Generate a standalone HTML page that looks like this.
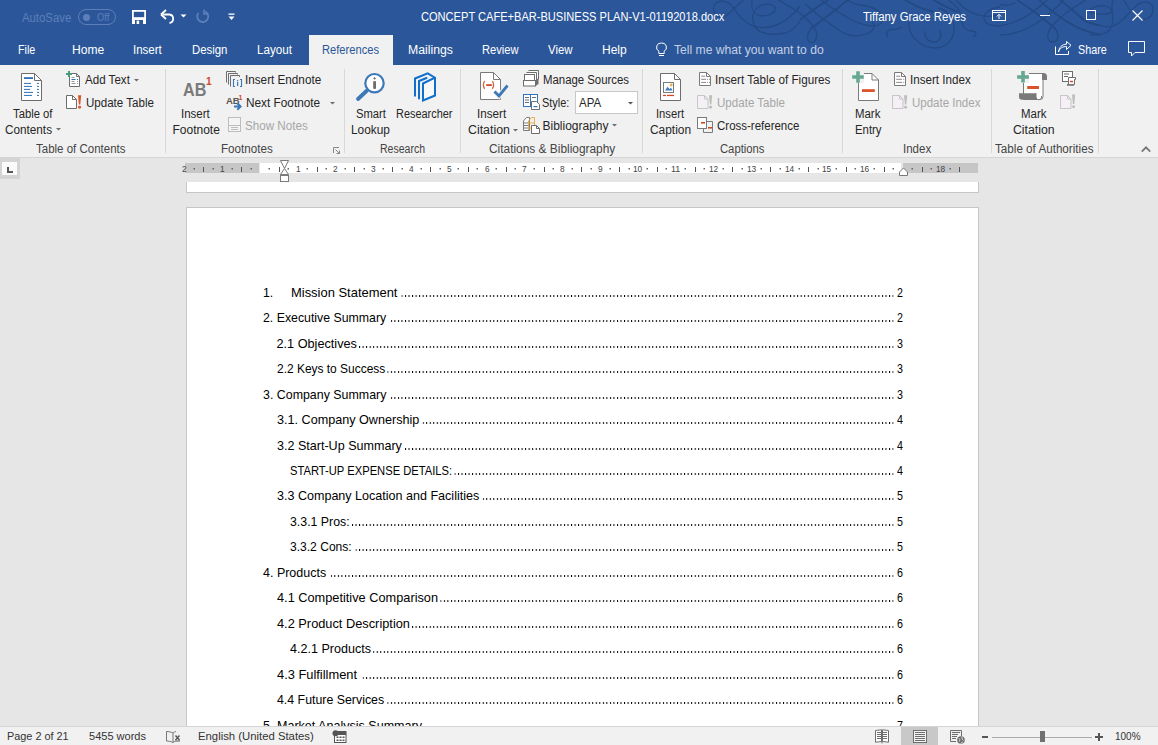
<!DOCTYPE html>
<html><head><meta charset="utf-8">
<style>
*{margin:0;padding:0;box-sizing:border-box}
html,body{width:1158px;height:745px;overflow:hidden;background:#e6e6e6;font-family:"Liberation Sans",sans-serif}
body{position:relative}
.a{position:absolute;white-space:nowrap}
.t{transform-origin:0 0}
svg.a{overflow:visible}
</style></head><body>
<div class="a" style="left:0px;top:0px;width:1158px;height:65px;background:#2b579a"></div>
<div class="a" style="left:0px;top:65px;width:1158px;height:92px;background:#f1f1f1"></div>
<div class="a" style="left:0px;top:157px;width:1158px;height:1px;background:#d5d5d5"></div>
<div class="a" style="left:0px;top:158px;width:1158px;height:568px;background:#e6e6e6"></div>
<svg class="a" style="left:0;top:0" width="1158" height="65"><g fill="none" stroke="#22477f" stroke-width="1.3" opacity="0.8"><path d="M723 18C714 16 711 8 716 3C721 -1 730 1 735 10C742 21 752 27 762 27.6C778 28 792 17 800 6"/><path d="M725 16.5C731 12 737 6 743 0"/><path d="M752 0C751 8 752 14 760 15.5C770 17 776 12 775 8C774 4 766 3 760 6C752 10 751 20 755 27C760 34 772 36 785 33C792 31 797 26 800 21"/><path d="M778 0C784 3 792 8 800 13"/><path d="M800 20C810 12 820 5 828.5 0" stroke-width="1.8"/><path d="M811 28.5C825 18 838 8 848 0" stroke-width="1.8"/><path d="M811 28.5C807 33 806 40 810 42C815 44 818 38 816 31C813 24 806 18 800 13"/><path d="M805 4C815 13 826 22 843 32.8C852 37 862 36 869 33C875 30 875 24 872 22"/><path d="M821 0C830 7 842 15 856 22C866 26 878 28 882 22C885 16 878 8 866 6C858 5 850 3 848 0"/><path d="M888 37C885 33 888 29 893 29.5C897 30 900 28 902 27"/><path d="M909 22C908 34 918 47 934 48C948 48 955 38 954 26C953 16 946 10 938 8"/><path d="M925 31C924 37 928 42 934 42C940 42 942 36 940 30"/><path d="M905 0C915 6 925 10 934 12" stroke-width="1.8"/><path d="M933 0C943 5 952 10 958 12" stroke-width="1.8"/><path d="M948 0C958 6 962 12 962 20C962 27 966 31 972 31C977 31 977 35 973 37"/><path d="M956 0C963 8 970 13 978 15C985 17 995 16 1000 15"/><path d="M1000 7C990 8 984 13 984 18C984 23 990 26 1000 26"/><path d="M1017 0C1030 8 1045 20 1055 28.5" stroke-width="1.8"/><path d="M1055 28.5C1060 34 1058 42 1053 42C1047 42 1046 34 1051 27C1058 19 1072 8 1086 0"/><path d="M1039 0C1050 10 1062 20 1078 27.6C1088 32 1095 34 1100 34.5" stroke-width="1.8"/><path d="M1000 35C1015 35 1030 28 1043 19C1052 12 1058 6 1064 0"/><path d="M1000 26C1012 24 1025 18 1034 11C1040 7 1044 3 1047 0"/><path d="M1060 0C1068 6 1078 15 1086 21.6C1092 24 1096 25 1100 25" stroke-width="1.8"/><path d="M1000 4.3C1006 6 1012 5 1015 2.6"/><path d="M1090 22C1096 25 1104 27 1110 26.8C1118 26 1125 18 1130 12C1135 6 1140 2 1145 2C1150 2 1153 5 1153 10C1153 15 1149 19 1143.7 19.5"/><path d="M1090 12C1094 14 1102 15 1107 14C1112 13 1113 10 1110 8C1106 5 1098 4 1090 9.4"/><path d="M1112.8 0C1111 6 1112 12 1112.8 16.8C1113 24 1111 30 1106.8 32.2C1102 35 1096 35.6 1090 35"/><path d="M1123.6 0C1126 4 1128 7 1130 10"/></g></svg>
<div class="a t" style="left:21.50px;top:12.00px;font-size:12px;line-height:12px;color:#5d7fb9;font-weight:normal;font-family:'Liberation Sans',sans-serif;transform:scaleX(0.9453);">AutoSave</div>
<div class="a" style="left:78px;top:9px;width:38px;height:16px;border:1px solid #5d7fb9;border-radius:8px"></div>
<div class="a" style="left:83px;top:13.5px;width:7px;height:7px;background:#5d7fb9;border-radius:50%"></div>
<div class="a t" style="left:97.00px;top:12.00px;font-size:11px;line-height:11px;color:#5d7fb9;font-weight:normal;font-family:'Liberation Sans',sans-serif;transform:scaleX(0.8434);">Off</div>
<svg class="a" style="left:132px;top:10px" width="14" height="14" viewBox="0 0 14 14"><rect x="0" y="0" width="14" height="14" fill="#fff"/><rect x="1.8" y="1.8" width="10.4" height="5.4" fill="#2b579a"/><rect x="3" y="10" width="8" height="4" fill="#2b579a"/><rect x="4.6" y="10.6" width="2.6" height="3.4" fill="#fff"/></svg>
<svg class="a" style="left:160px;top:9px" width="17" height="15" viewBox="0 0 17 15"><path d="M2.5 5.5H9.5A4.3 4.3 0 0 1 9.5 14" fill="none" stroke="#fff" stroke-width="1.8"/><path d="M1 5.5L6 1M1 5.5L6 10" fill="none" stroke="#fff" stroke-width="1.8"/></svg>
<svg class="a" style="left:180px;top:14px" width="7" height="4" viewBox="0 0 7 4"><path d="M0.5 0.5H6.5L3.5 3.5Z" fill="#fff"/></svg>
<svg class="a" style="left:195px;top:9px" width="15" height="15" viewBox="0 0 15 15"><path d="M10 2.5A5.5 5.5 0 1 1 3.5 4" fill="none" stroke="#5d7fb9" stroke-width="1.8"/><path d="M9 0.5V5H13.5" fill="none" stroke="#5d7fb9" stroke-width="1.6"/></svg>
<svg class="a" style="left:228px;top:13px" width="7" height="8" viewBox="0 0 7 8"><rect x="0.5" y="0.5" width="6" height="1.3" fill="#fff"/><path d="M0.5 3.5H6.5L3.5 7Z" fill="#fff"/></svg>
<div class="a t" style="left:421.00px;top:11.00px;font-size:12px;line-height:12px;color:#fff;font-weight:normal;font-family:'Liberation Sans',sans-serif;transform:scaleX(0.9228);">CONCEPT CAFE+BAR-BUSINESS PLAN-V1-01192018.docx</div>
<div class="a t" style="left:863.00px;top:11.00px;font-size:12px;line-height:12px;color:#fff;font-weight:normal;font-family:'Liberation Sans',sans-serif;transform:scaleX(0.9475);">Tiffany Grace Reyes</div>
<svg class="a" style="left:992px;top:10px" width="14" height="11" viewBox="0 0 14 11"><rect x="0.5" y="0.5" width="13" height="10" fill="none" stroke="#fff" stroke-width="1"/><path d="M0.5 2.5H13.5" stroke="#fff" stroke-width="1"/><path d="M7 9V4.5M4.8 6.5L7 4.3L9.2 6.5" fill="none" stroke="#fff" stroke-width="1"/></svg>
<div class="a" style="left:1040px;top:15px;width:10px;height:1px;background:#fff"></div>
<div class="a" style="left:1086px;top:10px;width:10px;height:10px;border:1px solid #fff"></div>
<svg class="a" style="left:1132px;top:10px" width="11" height="11" viewBox="0 0 11 11"><path d="M0.5 0.5L10.5 10.5M10.5 0.5L0.5 10.5" stroke="#fff" stroke-width="1.1"/></svg>
<div class="a" style="left:309px;top:35px;width:84px;height:30px;background:#f1f1f1"></div>
<div class="a t" style="left:18.40px;top:44.00px;font-size:12px;line-height:12px;color:#fff;font-weight:normal;font-family:'Liberation Sans',sans-serif;transform:scaleX(0.8951);">File</div>
<div class="a t" style="left:72.30px;top:44.00px;font-size:12px;line-height:12px;color:#fff;font-weight:normal;font-family:'Liberation Sans',sans-serif;transform:scaleX(1.0051);">Home</div>
<div class="a t" style="left:133.34px;top:44.00px;font-size:12px;line-height:12px;color:#fff;font-weight:normal;font-family:'Liberation Sans',sans-serif;transform:scaleX(0.9603);">Insert</div>
<div class="a t" style="left:192.40px;top:44.00px;font-size:12px;line-height:12px;color:#fff;font-weight:normal;font-family:'Liberation Sans',sans-serif;transform:scaleX(0.9488);">Design</div>
<div class="a t" style="left:257.30px;top:44.00px;font-size:12px;line-height:12px;color:#fff;font-weight:normal;font-family:'Liberation Sans',sans-serif;transform:scaleX(0.9729);">Layout</div>
<div class="a t" style="left:408.30px;top:44.00px;font-size:12px;line-height:12px;color:#fff;font-weight:normal;font-family:'Liberation Sans',sans-serif;transform:scaleX(1.0201);">Mailings</div>
<div class="a t" style="left:482.00px;top:44.00px;font-size:12px;line-height:12px;color:#fff;font-weight:normal;font-family:'Liberation Sans',sans-serif;transform:scaleX(0.9299);">Review</div>
<div class="a t" style="left:547.90px;top:44.00px;font-size:12px;line-height:12px;color:#fff;font-weight:normal;font-family:'Liberation Sans',sans-serif;transform:scaleX(0.9492);">View</div>
<div class="a t" style="left:602.00px;top:44.00px;font-size:12px;line-height:12px;color:#fff;font-weight:normal;font-family:'Liberation Sans',sans-serif;">Help</div>
<div class="a t" style="left:322.00px;top:44.00px;font-size:12px;line-height:12px;color:#2b579a;font-weight:normal;font-family:'Liberation Sans',sans-serif;transform:scaleX(0.9289);">References</div>
<svg class="a" style="left:655px;top:42px" width="13" height="15" viewBox="0 0 13 15"><path d="M6.5 1A4.4 4.4 0 0 0 3.8 9.2V11.5H9.2V9.2A4.4 4.4 0 0 0 6.5 1Z" fill="none" stroke="#fff" stroke-width="1"/><path d="M4 13.5H9" stroke="#fff" stroke-width="1"/></svg>
<div class="a t" style="left:673.60px;top:44.00px;font-size:12px;line-height:12px;color:#c3cfe4;font-weight:normal;font-family:'Liberation Sans',sans-serif;transform:scaleX(1.0108);">Tell me what you want to do</div>
<svg class="a" style="left:1054px;top:41px" width="18" height="15" viewBox="0 0 18 15"><path d="M1.5 5.5V13.5H14.5V10" fill="none" stroke="#fff" stroke-width="1"/><path d="M4.5 11C5.5 7 9 5.5 12.5 5.5V8.5L17 4.3L12.5 0.5V3.2C8 3.2 5 6.5 4.5 11Z" fill="none" stroke="#fff" stroke-width="1"/></svg>
<div class="a t" style="left:1078.00px;top:44.00px;font-size:12px;line-height:12px;color:#fff;font-weight:normal;font-family:'Liberation Sans',sans-serif;transform:scaleX(0.8965);">Share</div>
<svg class="a" style="left:1128px;top:41px" width="18" height="16" viewBox="0 0 18 16"><path d="M0.5 0.5H16.5V11.5H7L3.5 15V11.5H0.5Z" fill="none" stroke="#fff" stroke-width="1"/></svg>
<div class="a" style="left:165px;top:69px;width:1px;height:84px;background:#d8d8d8"></div>
<div class="a" style="left:344px;top:69px;width:1px;height:84px;background:#d8d8d8"></div>
<div class="a" style="left:460px;top:69px;width:1px;height:84px;background:#d8d8d8"></div>
<div class="a" style="left:642px;top:69px;width:1px;height:84px;background:#d8d8d8"></div>
<div class="a" style="left:842px;top:69px;width:1px;height:84px;background:#d8d8d8"></div>
<div class="a" style="left:991px;top:69px;width:1px;height:84px;background:#d8d8d8"></div>
<div class="a" style="left:1098px;top:69px;width:1px;height:84px;background:#d8d8d8"></div>
<svg class="a" style="left:21px;top:73px" width="22" height="29" viewBox="0 0 22 29"><path d="M0.5 0.5H13.5L20.5 7.5V27.5H0.5Z" fill="#fff" stroke="#6d6d6d" stroke-width="1"/><path d="M13.5 0.5V7.5H20.5" fill="none" stroke="#6d6d6d" stroke-width="1"/><rect x="3" y="4.2" width="9" height="1.8" fill="#2e6fb8"/><g fill="#2e6fb8"><rect x="3" y="9.9" width="7" height="1"/><rect x="3" y="12.9" width="8" height="1"/><rect x="3" y="15.9" width="6" height="1"/><rect x="3" y="18.9" width="9" height="1"/><rect x="3" y="21.9" width="8" height="1"/><rect x="16" y="9.9" width="2" height="1"/><rect x="16" y="12.9" width="2" height="1"/><rect x="16" y="15.9" width="2" height="1"/><rect x="16" y="18.9" width="2" height="1"/><rect x="16" y="21.9" width="2" height="1"/></g></svg>
<div class="a t" style="left:12.50px;top:108.00px;font-size:12px;line-height:12px;color:#262626;font-weight:normal;font-family:'Liberation Sans',sans-serif;transform:scaleX(0.9392);">Table of</div>
<div class="a t" style="left:4.70px;top:124.00px;font-size:12px;line-height:12px;color:#262626;font-weight:normal;font-family:'Liberation Sans',sans-serif;transform:scaleX(0.9786);">Contents</div>
<svg class="a" style="left:55.5px;top:128px" width="5" height="3" viewBox="0 0 5 3"><path d="M0 0H5L2.5 2.5Z" fill="#6d6d6d"/></svg>
<svg class="a" style="left:66px;top:71px" width="15" height="17" viewBox="0 0 15 17"><path d="M3.5 2.5H10.5L13.5 5.5V15.5H3.5Z" fill="#fff" stroke="#6d6d6d" stroke-width="1"/><path d="M10.5 2.5V5.5H13.5" fill="none" stroke="#6d6d6d"/><path d="M3 0V6M0 3H6" stroke="#4c9a7c" stroke-width="2"/><g fill="#9a9a9a"><rect x="5.5" y="6" width="3" height="1"/><rect x="5.5" y="10" width="3" height="1"/><rect x="5.5" y="12" width="4" height="1"/><rect x="11" y="10" width="1" height="1"/><rect x="11" y="12" width="1" height="1"/></g><rect x="5.5" y="8" width="4" height="1" fill="#2e6fb8"/><rect x="11" y="8" width="1" height="1" fill="#2e6fb8"/></svg>
<div class="a t" style="left:85.00px;top:74.00px;font-size:12px;line-height:12px;color:#262626;font-weight:normal;font-family:'Liberation Sans',sans-serif;transform:scaleX(0.9650);">Add Text</div>
<svg class="a" style="left:133.5px;top:78.5px" width="5" height="3" viewBox="0 0 5 3"><path d="M0 0H5L2.5 2.5Z" fill="#6d6d6d"/></svg>
<svg class="a" style="left:66px;top:95px" width="16" height="15" viewBox="0 0 16 15"><path d="M0.5 0.5H6.5L10.5 4.5V13.5H0.5Z" fill="#fff" stroke="#6d6d6d" stroke-width="1"/><path d="M6.5 0.5V4.5H10.5" fill="none" stroke="#6d6d6d"/><path d="M12 0.3H15.2L14.3 9.5H12.9Z" fill="#d9542b"/><circle cx="13.6" cy="12.3" r="1.45" fill="#d9542b"/></svg>
<div class="a t" style="left:85.60px;top:97.00px;font-size:12px;line-height:12px;color:#262626;font-weight:normal;font-family:'Liberation Sans',sans-serif;transform:scaleX(0.9628);">Update Table</div>
<div class="a t" style="left:36.00px;top:143.00px;font-size:12px;line-height:12px;color:#444444;font-weight:normal;font-family:'Liberation Sans',sans-serif;transform:scaleX(0.9583);">Table of Contents</div>
<div class="a t" style="left:183.20px;top:81.00px;font-size:18px;line-height:18px;color:#7a7a7a;font-weight:bold;font-family:'Liberation Sans',sans-serif;transform:scaleX(0.8962);">AB</div>
<div class="a t" style="left:205.50px;top:76.00px;font-size:11px;line-height:11px;color:#d24726;font-weight:bold;font-family:'Liberation Sans',sans-serif;transform:scaleX(0.9167);">1</div>
<div class="a t" style="left:181.44px;top:108.00px;font-size:12px;line-height:12px;color:#262626;font-weight:normal;font-family:'Liberation Sans',sans-serif;transform:scaleX(0.9603);">Insert</div>
<div class="a t" style="left:172.50px;top:124.00px;font-size:12px;line-height:12px;color:#262626;font-weight:normal;font-family:'Liberation Sans',sans-serif;">Footnote</div>
<svg class="a" style="left:226px;top:71px" width="17" height="17" viewBox="0 0 17 17"><g fill="none" stroke="#6d6d6d" stroke-width="1"><path d="M0.5 11.5V0.5H9.5V1.5"/><path d="M2.5 13.5V2.5H11.5V3.5"/><path d="M4.5 15.5V4.5H13.5V6"/></g><rect x="5" y="5" width="8" height="11" fill="#f1f1f1"/><path d="M9 8.5H7.5V15.5H9M14 8.5H15.5V15.5H14" fill="none" stroke="#3c78b8" stroke-width="1.1"/><rect x="11" y="9" width="1.2" height="1.2" fill="#3c78b8"/><rect x="11" y="11" width="1.2" height="4" fill="#3c78b8"/></svg>
<div class="a t" style="left:244.52px;top:74.00px;font-size:12px;line-height:12px;color:#262626;font-weight:normal;font-family:'Liberation Sans',sans-serif;transform:scaleX(0.9757);">Insert Endnote</div>
<svg class="a" style="left:226px;top:94px" width="17" height="16" viewBox="0 0 17 16"><text x="0" y="9.5" font-family="Liberation Sans" font-weight="bold" font-size="9.5" fill="#555">AB</text><text x="12.5" y="6" font-family="Liberation Sans" font-weight="bold" font-size="7" fill="#d24726">1</text><path d="M8 12.5H14.5M11.3 9.3L14.5 12.5L11.3 15.7" fill="none" stroke="#3c78b8" stroke-width="2.1"/></svg>
<div class="a t" style="left:245.50px;top:97.00px;font-size:12px;line-height:12px;color:#262626;font-weight:normal;font-family:'Liberation Sans',sans-serif;transform:scaleX(0.9841);">Next Footnote</div>
<svg class="a" style="left:330px;top:101.5px" width="5" height="3" viewBox="0 0 5 3"><path d="M0 0H5L2.5 2.5Z" fill="#6d6d6d"/></svg>
<svg class="a" style="left:228px;top:117px" width="13" height="15" viewBox="0 0 13 15"><rect x="0.5" y="0.5" width="12" height="14" fill="#f4f4f4" stroke="#bdbdbd"/><path d="M0.5 8.5H12.5" stroke="#bdbdbd"/><g fill="#bdbdbd"><rect x="3" y="10" width="7" height="1"/><rect x="3" y="12" width="7" height="1"/></g></svg>
<div class="a t" style="left:245.00px;top:120.00px;font-size:12px;line-height:12px;color:#a6a6a6;font-weight:normal;font-family:'Liberation Sans',sans-serif;transform:scaleX(0.9691);">Show Notes</div>
<div class="a t" style="left:220.60px;top:143.00px;font-size:12px;line-height:12px;color:#444444;font-weight:normal;font-family:'Liberation Sans',sans-serif;transform:scaleX(0.9688);">Footnotes</div>
<svg class="a" style="left:333px;top:146.5px" width="7" height="7" viewBox="0 0 7 7"><path d="M0.5 6V0.5H6" fill="none" stroke="#888"/><path d="M2.5 2.5L6.5 6.5M3.5 6.5H6.5V3.5" fill="none" stroke="#888"/></svg>
<svg class="a" style="left:356px;top:72px" width="30" height="30" viewBox="0 0 30 30"><path d="M2 27L11 18.5" stroke="#3c78b8" stroke-width="3.8" stroke-linecap="round"/><circle cx="18.5" cy="11.2" r="9.2" fill="#fff" stroke="#3c78b8" stroke-width="2.2"/><rect x="17.2" y="9.2" width="2.8" height="7.6" fill="#6d6d6d"/><path d="M18.6 5L20 6.4L18.6 7.8L17.2 6.4Z" fill="#6d6d6d"/></svg>
<div class="a t" style="left:356.00px;top:108.00px;font-size:12px;line-height:12px;color:#262626;font-weight:normal;font-family:'Liberation Sans',sans-serif;transform:scaleX(0.9366);">Smart</div>
<div class="a t" style="left:351.30px;top:124.00px;font-size:12px;line-height:12px;color:#262626;font-weight:normal;font-family:'Liberation Sans',sans-serif;transform:scaleX(0.9875);">Lookup</div>
<svg class="a" style="left:408px;top:68px" width="34" height="36" viewBox="0 0 34 36"><path d="M15 15.5L27 10V27.5L15 32.5Z" fill="#f8f8f8"/><g fill="none" stroke="#0f6fcd" stroke-width="2" stroke-linejoin="miter"><path d="M7 28.5V10.5L19.7 5.3L27 9.7V27.5L15 32.5V15.5L27 9.7"/><path d="M11 30.5V13L18.5 10" stroke-linecap="round"/></g></svg>
<div class="a t" style="left:396.30px;top:108.00px;font-size:12px;line-height:12px;color:#262626;font-weight:normal;font-family:'Liberation Sans',sans-serif;transform:scaleX(0.9092);">Researcher</div>
<div class="a t" style="left:379.60px;top:143.00px;font-size:12px;line-height:12px;color:#444444;font-weight:normal;font-family:'Liberation Sans',sans-serif;transform:scaleX(0.8760);">Research</div>
<svg class="a" style="left:480px;top:72px" width="29" height="29" viewBox="0 0 29 29"><path d="M0.5 0.5H13.5L20.5 7.5V27.5H0.5Z" fill="#fff" stroke="#7a7a7a"/><path d="M13.5 0.5V7.5H20.5" fill="none" stroke="#7a7a7a"/><path d="M4.6 9Q2.2 12.9 4.6 16.8M12.4 9Q14.8 12.9 12.4 16.8" fill="none" stroke="#d9623f" stroke-width="1.3"/><rect x="6.2" y="12.2" width="5.6" height="1.8" fill="#d24726"/><path d="M14.5 19.5L19 24L27.5 13.5" fill="none" stroke="#f1f1f1" stroke-width="5"/><path d="M14.5 19.5L19 24L27.5 13.5" fill="none" stroke="#3c78b8" stroke-width="2.8"/></svg>
<div class="a t" style="left:477.03px;top:108.00px;font-size:12px;line-height:12px;color:#262626;font-weight:normal;font-family:'Liberation Sans',sans-serif;transform:scaleX(0.9704);">Insert</div>
<div class="a t" style="left:467.50px;top:124.00px;font-size:12px;line-height:12px;color:#262626;font-weight:normal;font-family:'Liberation Sans',sans-serif;transform:scaleX(1.0296);">Citation</div>
<svg class="a" style="left:512.5px;top:128.5px" width="5" height="3" viewBox="0 0 5 3"><path d="M0 0H5L2.5 2.5Z" fill="#6d6d6d"/></svg>
<svg class="a" style="left:523px;top:70px" width="16" height="17" viewBox="0 0 16 17"><g fill="#fff" stroke="#6d6d6d"><path d="M5.5 0.5H15.5V9.5"/><path d="M3.5 2.5H13.5V11.5"/><rect x="1.5" y="4.5" width="10" height="6"/><rect x="0.5" y="10.5" width="12" height="5.5"/></g><path d="M12.5 10.5L15.5 8V14L12.5 16Z" fill="#6d6d6d"/></svg>
<div class="a t" style="left:542.50px;top:74.00px;font-size:12px;line-height:12px;color:#262626;font-weight:normal;font-family:'Liberation Sans',sans-serif;transform:scaleX(0.9480);">Manage Sources</div>
<svg class="a" style="left:523px;top:94px" width="17" height="16" viewBox="0 0 17 16"><g fill="#fff" stroke="#2e74c0"><rect x="0.5" y="0.5" width="7" height="12"/><rect x="7.5" y="0.5" width="7" height="12"/></g><g fill="#6d6d6d"><rect x="2" y="3" width="4" height="1"/><rect x="2" y="5.5" width="4" height="1"/><rect x="2" y="8" width="4" height="1"/><rect x="9" y="3" width="4" height="1"/></g><path d="M8.5 7.5H13.5L16.5 10.5V15.5H8.5Z" fill="#fff" stroke="#6d6d6d"/><rect x="10.5" y="12" width="4" height="1.2" fill="#2e74c0"/></svg>
<div class="a t" style="left:542.00px;top:97.00px;font-size:12px;line-height:12px;color:#262626;font-weight:normal;font-family:'Liberation Sans',sans-serif;transform:scaleX(0.9098);">Style:</div>
<div class="a" style="left:575px;top:91px;width:63px;height:23px;background:#fff;border:1px solid #c8c8c8"></div>
<div class="a t" style="left:578.50px;top:97.00px;font-size:12px;line-height:12px;color:#262626;font-weight:normal;font-family:'Liberation Sans',sans-serif;transform:scaleX(0.9560);">APA</div>
<svg class="a" style="left:627.5px;top:101.5px" width="5" height="3" viewBox="0 0 5 3"><path d="M0 0H5L2.5 2.5Z" fill="#555"/></svg>
<svg class="a" style="left:523px;top:116px" width="17" height="18" viewBox="0 0 17 18"><path d="M0.5 5L3.5 1.5H6.5V14.5H0.5Z" fill="#fff" stroke="#7a7a7a"/><g fill="#7a7a7a"><rect x="1" y="6.5" width="5" height="1"/><rect x="1" y="9" width="5" height="1"/><rect x="1" y="11.5" width="5" height="1"/></g><path d="M5.5 5L8.5 1.5H11.5V9M5.5 5V14" fill="none" stroke="#e8b04a" stroke-width="1"/><g fill="#e8b04a"><rect x="6" y="6.5" width="5" height="1"/><rect x="6" y="11.5" width="2" height="1"/></g><path d="M8.5 9.5H13.5L16.5 12.5V17.5H8.5Z" fill="#fff" stroke="#6d6d6d"/><path d="M13.5 9.5V12.5H16.5" fill="none" stroke="#6d6d6d"/></svg>
<div class="a t" style="left:542.50px;top:120.00px;font-size:12px;line-height:12px;color:#262626;font-weight:normal;font-family:'Liberation Sans',sans-serif;">Bibliography</div>
<svg class="a" style="left:612px;top:123.5px" width="5" height="3" viewBox="0 0 5 3"><path d="M0 0H5L2.5 2.5Z" fill="#6d6d6d"/></svg>
<div class="a t" style="left:488.70px;top:143.00px;font-size:12px;line-height:12px;color:#444444;font-weight:normal;font-family:'Liberation Sans',sans-serif;transform:scaleX(0.9914);">Citations &amp; Bibliography</div>
<svg class="a" style="left:660px;top:73px" width="22" height="29" viewBox="0 0 22 29"><path d="M0.5 0.5H14.5L20.5 6.5V27.5H0.5Z" fill="#fff" stroke="#6d6d6d"/><path d="M14.5 0.5V6.5H20.5" fill="none" stroke="#6d6d6d"/><rect x="3.5" y="9.5" width="10" height="10" fill="#fff" stroke="#7a7a7a"/><path d="M5 17.5L7.5 13.8L9.5 16L11 14.8L12.5 17.5Z" fill="#3e7cc0"/><circle cx="11.3" cy="12" r="1.4" fill="#e8b04a"/><rect x="3" y="21.8" width="3" height="1.3" fill="#d24726"/><rect x="7" y="21.8" width="7" height="1.3" fill="#d24726"/></svg>
<div class="a t" style="left:655.77px;top:108.00px;font-size:12px;line-height:12px;color:#262626;font-weight:normal;font-family:'Liberation Sans',sans-serif;transform:scaleX(0.9334);">Insert</div>
<div class="a t" style="left:650.00px;top:124.00px;font-size:12px;line-height:12px;color:#262626;font-weight:normal;font-family:'Liberation Sans',sans-serif;transform:scaleX(0.9929);">Caption</div>
<svg class="a" style="left:699px;top:72px" width="13" height="14" viewBox="0 0 13 14"><path d="M0.5 0.5H7.5L11.5 4.5V13.5H0.5Z" fill="#fff" stroke="#7a7a7a"/><path d="M7.5 0.5V4.5H11.5" fill="none" stroke="#7a7a7a"/><g fill="#8a8a8a"><rect x="2.2" y="3.7" width="3.8" height="1"/><rect x="2.2" y="6.8" width="4.8" height="1"/><rect x="2.2" y="9.9" width="4.8" height="1"/><rect x="8" y="6.8" width="1" height="1"/><rect x="8" y="9.9" width="1" height="1"/><rect x="10" y="6.8" width="1" height="1"/><rect x="10" y="9.9" width="1" height="1"/></g></svg>
<div class="a t" style="left:715.23px;top:74.00px;font-size:12px;line-height:12px;color:#262626;font-weight:normal;font-family:'Liberation Sans',sans-serif;transform:scaleX(0.9735);">Insert Table of Figures</div>
<svg class="a" style="left:697px;top:95px" width="16" height="14" viewBox="0 0 16 14"><path d="M0.5 0.5H7.5L11 4V13.5H0.5Z" fill="#f4f0f6" stroke="#c6c6c6"/><path d="M7.5 0.5V4H11" fill="none" stroke="#c6c6c6"/><path d="M12 0.3H15.2L14.3 9.5H12.9Z" fill="#bdbdbd"/><circle cx="13.6" cy="12.3" r="1.45" fill="#bdbdbd"/></svg>
<div class="a t" style="left:716.50px;top:97.00px;font-size:12px;line-height:12px;color:#a6a6a6;font-weight:normal;font-family:'Liberation Sans',sans-serif;transform:scaleX(0.9642);">Update Table</div>
<svg class="a" style="left:697px;top:117px" width="17" height="17" viewBox="0 0 17 17"><path d="M9.5 4.5H15.5V15.5H6.5V11.5" fill="none" stroke="#7a7a7a"/><rect x="0.5" y="0.5" width="9" height="11" fill="#fff" stroke="#7a7a7a"/><rect x="4" y="5" width="4" height="1.6" fill="#d24726"/><rect x="11" y="10" width="4" height="1.6" fill="#d24726"/></svg>
<div class="a t" style="left:716.50px;top:120.00px;font-size:12px;line-height:12px;color:#262626;font-weight:normal;font-family:'Liberation Sans',sans-serif;transform:scaleX(0.9577);">Cross-reference</div>
<div class="a t" style="left:719.80px;top:143.00px;font-size:12px;line-height:12px;color:#444444;font-weight:normal;font-family:'Liberation Sans',sans-serif;transform:scaleX(0.9375);">Captions</div>
<svg class="a" style="left:852px;top:71px" width="28" height="30" viewBox="0 0 28 30"><path d="M6.5 2.5H20L26.5 9V29.5H6.5Z" fill="#fff" stroke="#7a7a7a"/><path d="M20 2.5V9H26.5" fill="none" stroke="#7a7a7a"/><path d="M0 0H12V12H0Z" fill="#f1f1f1"/><path d="M6 0.2V11.8M0.2 6H11.8" stroke="#66a893" stroke-width="3.6"/><rect x="10" y="18.2" width="12.8" height="2.8" fill="#d9542b"/></svg>
<div class="a t" style="left:854.50px;top:108.00px;font-size:12px;line-height:12px;color:#262626;font-weight:normal;font-family:'Liberation Sans',sans-serif;transform:scaleX(0.9506);">Mark</div>
<div class="a t" style="left:854.50px;top:124.00px;font-size:12px;line-height:12px;color:#262626;font-weight:normal;font-family:'Liberation Sans',sans-serif;transform:scaleX(0.9462);">Entry</div>
<svg class="a" style="left:894px;top:72px" width="13" height="14" viewBox="0 0 13 14"><path d="M0.5 0.5H7.5L11.5 4.5V13.5H0.5Z" fill="#fff" stroke="#7a7a7a"/><path d="M7.5 0.5V4.5H11.5" fill="none" stroke="#7a7a7a"/><g fill="#8a8a8a"><rect x="2.2" y="3.7" width="3.8" height="1"/><rect x="2.2" y="6.8" width="5.8" height="1"/><rect x="2.2" y="9.9" width="5.8" height="1"/><rect x="9.2" y="6.8" width="1" height="1"/><rect x="9.2" y="9.9" width="1" height="1"/></g></svg>
<div class="a t" style="left:910.23px;top:74.00px;font-size:12px;line-height:12px;color:#262626;font-weight:normal;font-family:'Liberation Sans',sans-serif;transform:scaleX(0.9692);">Insert Index</div>
<svg class="a" style="left:892px;top:95px" width="16" height="14" viewBox="0 0 16 14"><path d="M0.5 0.5H7.5L11 4V13.5H0.5Z" fill="#f4f0f6" stroke="#c6c6c6"/><path d="M7.5 0.5V4H11" fill="none" stroke="#c6c6c6"/><path d="M12 0.3H15.2L14.3 9.5H12.9Z" fill="#bdbdbd"/><circle cx="13.6" cy="12.3" r="1.45" fill="#bdbdbd"/></svg>
<div class="a t" style="left:911.60px;top:97.00px;font-size:12px;line-height:12px;color:#a6a6a6;font-weight:normal;font-family:'Liberation Sans',sans-serif;transform:scaleX(0.9582);">Update Index</div>
<div class="a t" style="left:902.64px;top:143.00px;font-size:12px;line-height:12px;color:#444444;font-weight:normal;font-family:'Liberation Sans',sans-serif;transform:scaleX(0.9593);">Index</div>
<svg class="a" style="left:1016px;top:70px" width="32" height="31" viewBox="0 0 32 31"><path d="M7.5 3.5H27V26.5A3 3 0 0 1 24 29.5H7.5Z" fill="#fff" stroke="#7a7a7a"/><path d="M26 3H27.5A3.5 3.5 0 0 1 31 6.5V10H26Z" fill="#7a7a7a"/><path d="M3 23.2H20V29.8H6A3 3 0 0 1 3 26.8Z" fill="#7a7a7a"/><path d="M20 23.2V27A2.8 2.8 0 0 0 25.6 27V26" fill="#fff" stroke="#7a7a7a"/><path d="M1 1H13V13H1Z" fill="#f1f1f1"/><path d="M7 1V12.6M1.1 7H12.9" stroke="#66a893" stroke-width="3.6"/><rect x="11.2" y="16" width="11.8" height="3" fill="#d9542b"/></svg>
<div class="a t" style="left:1020.50px;top:108.00px;font-size:12px;line-height:12px;color:#262626;font-weight:normal;font-family:'Liberation Sans',sans-serif;transform:scaleX(0.9542);">Mark</div>
<div class="a t" style="left:1012.50px;top:124.00px;font-size:12px;line-height:12px;color:#262626;font-weight:normal;font-family:'Liberation Sans',sans-serif;transform:scaleX(1.0222);">Citation</div>
<svg class="a" style="left:1062px;top:71px" width="15" height="15" viewBox="0 0 15 15"><rect x="0.5" y="0.5" width="10" height="10" fill="#fff" stroke="#6d6d6d"/><g fill="#6d6d6d"><rect x="2" y="2.5" width="5" height="1"/><rect x="2" y="5" width="4" height="1"/></g><path d="M6.5 6.5H13.5V8.5H12.5V13.5H6.5Z" fill="#fff" stroke="#6d6d6d"/><rect x="8" y="9.8" width="3" height="1.4" fill="#d24726"/><rect x="5" y="13" width="7" height="1.8" fill="#7a7a7a"/></svg>
<svg class="a" style="left:1060px;top:94px" width="16" height="15" viewBox="0 0 16 15"><path d="M0.5 1.5H7.5L11 5V14.5H0.5Z" fill="#f4f0f6" stroke="#c6c6c6"/><path d="M7.5 1.5V5H11" fill="none" stroke="#c6c6c6"/><path d="M12 0.5H15.2L14.3 10H12.9Z" fill="#bdbdbd"/><circle cx="13.6" cy="12.8" r="1.45" fill="#bdbdbd"/></svg>
<div class="a t" style="left:995.40px;top:143.00px;font-size:12px;line-height:12px;color:#444444;font-weight:normal;font-family:'Liberation Sans',sans-serif;transform:scaleX(0.9710);">Table of Authorities</div>
<svg class="a" style="left:1140.5px;top:145.5px" width="10" height="7" viewBox="0 0 10 7"><path d="M0.8 5.6L5 1.4L9.2 5.6" fill="none" stroke="#777" stroke-width="1.9"/></svg>
<div class="a" style="left:0px;top:158px;width:20px;height:21px;background:#d4d4d4"></div>
<div class="a" style="left:2px;top:162px;width:15px;height:13px;background:#fbfbfb"></div>
<div class="a" style="left:7px;top:167px;width:2px;height:6px;background:#555"></div>
<div class="a" style="left:7px;top:171px;width:6px;height:2px;background:#555"></div>
<div class="a" style="left:185px;top:163px;width:74px;height:10px;background:#c6c6c6"></div>
<div class="a" style="left:260px;top:163px;width:641px;height:10px;background:#fff"></div>
<div class="a" style="left:903px;top:163px;width:75px;height:10px;background:#c6c6c6"></div>
<svg class="a" style="left:0;top:163px" width="1158" height="10"><rect x="193.50" y="5" width="1.5" height="1.5" fill="#666"/><rect x="203" y="4" width="1" height="5" fill="#555"/><rect x="212.50" y="5" width="1.5" height="1.5" fill="#666"/><rect x="231.50" y="5" width="1.5" height="1.5" fill="#666"/><rect x="241" y="4" width="1" height="5" fill="#555"/><rect x="250.50" y="5" width="1.5" height="1.5" fill="#666"/><rect x="268.50" y="5" width="1.5" height="1.5" fill="#666"/><rect x="279" y="4" width="1" height="5" fill="#555"/><rect x="287.50" y="5" width="1.5" height="1.5" fill="#666"/><rect x="306.50" y="5" width="1.5" height="1.5" fill="#666"/><rect x="317" y="4" width="1" height="5" fill="#555"/><rect x="325.50" y="5" width="1.5" height="1.5" fill="#666"/><rect x="344.50" y="5" width="1.5" height="1.5" fill="#666"/><rect x="354" y="4" width="1" height="5" fill="#555"/><rect x="363.50" y="5" width="1.5" height="1.5" fill="#666"/><rect x="382.50" y="5" width="1.5" height="1.5" fill="#666"/><rect x="392" y="4" width="1" height="5" fill="#555"/><rect x="401.50" y="5" width="1.5" height="1.5" fill="#666"/><rect x="420.50" y="5" width="1.5" height="1.5" fill="#666"/><rect x="430" y="4" width="1" height="5" fill="#555"/><rect x="439.50" y="5" width="1.5" height="1.5" fill="#666"/><rect x="457.50" y="5" width="1.5" height="1.5" fill="#666"/><rect x="468" y="4" width="1" height="5" fill="#555"/><rect x="476.50" y="5" width="1.5" height="1.5" fill="#666"/><rect x="495.50" y="5" width="1.5" height="1.5" fill="#666"/><rect x="506" y="4" width="1" height="5" fill="#555"/><rect x="514.50" y="5" width="1.5" height="1.5" fill="#666"/><rect x="533.50" y="5" width="1.5" height="1.5" fill="#666"/><rect x="544" y="4" width="1" height="5" fill="#555"/><rect x="552.50" y="5" width="1.5" height="1.5" fill="#666"/><rect x="571.50" y="5" width="1.5" height="1.5" fill="#666"/><rect x="581" y="4" width="1" height="5" fill="#555"/><rect x="590.50" y="5" width="1.5" height="1.5" fill="#666"/><rect x="609.50" y="5" width="1.5" height="1.5" fill="#666"/><rect x="619" y="4" width="1" height="5" fill="#555"/><rect x="628.50" y="5" width="1.5" height="1.5" fill="#666"/><rect x="646.50" y="5" width="1.5" height="1.5" fill="#666"/><rect x="657" y="4" width="1" height="5" fill="#555"/><rect x="665.50" y="5" width="1.5" height="1.5" fill="#666"/><rect x="684.50" y="5" width="1.5" height="1.5" fill="#666"/><rect x="695" y="4" width="1" height="5" fill="#555"/><rect x="703.50" y="5" width="1.5" height="1.5" fill="#666"/><rect x="722.50" y="5" width="1.5" height="1.5" fill="#666"/><rect x="732" y="4" width="1" height="5" fill="#555"/><rect x="741.50" y="5" width="1.5" height="1.5" fill="#666"/><rect x="760.50" y="5" width="1.5" height="1.5" fill="#666"/><rect x="770" y="4" width="1" height="5" fill="#555"/><rect x="779.50" y="5" width="1.5" height="1.5" fill="#666"/><rect x="798.50" y="5" width="1.5" height="1.5" fill="#666"/><rect x="808" y="4" width="1" height="5" fill="#555"/><rect x="817.50" y="5" width="1.5" height="1.5" fill="#666"/><rect x="835.50" y="5" width="1.5" height="1.5" fill="#666"/><rect x="846" y="4" width="1" height="5" fill="#555"/><rect x="854.50" y="5" width="1.5" height="1.5" fill="#666"/><rect x="873.50" y="5" width="1.5" height="1.5" fill="#666"/><rect x="884" y="4" width="1" height="5" fill="#555"/><rect x="892.50" y="5" width="1.5" height="1.5" fill="#666"/><rect x="911.50" y="5" width="1.5" height="1.5" fill="#666"/><rect x="922" y="4" width="1" height="5" fill="#555"/><rect x="930.50" y="5" width="1.5" height="1.5" fill="#666"/><rect x="949.50" y="5" width="1.5" height="1.5" fill="#666"/><rect x="959" y="4" width="1" height="5" fill="#555"/></svg>
<div class="a t" style="left:182.10px;top:165.00px;font-size:9px;line-height:9px;color:#444;font-weight:normal;font-family:'Liberation Sans',sans-serif;transform:scaleX(0.9200);">2</div>
<div class="a t" style="left:219.90px;top:165.00px;font-size:9px;line-height:9px;color:#444;font-weight:normal;font-family:'Liberation Sans',sans-serif;transform:scaleX(0.9200);">1</div>
<div class="a t" style="left:295.50px;top:165.00px;font-size:9px;line-height:9px;color:#444;font-weight:normal;font-family:'Liberation Sans',sans-serif;transform:scaleX(0.9200);">1</div>
<div class="a t" style="left:333.30px;top:165.00px;font-size:9px;line-height:9px;color:#444;font-weight:normal;font-family:'Liberation Sans',sans-serif;transform:scaleX(0.9200);">2</div>
<div class="a t" style="left:371.10px;top:165.00px;font-size:9px;line-height:9px;color:#444;font-weight:normal;font-family:'Liberation Sans',sans-serif;transform:scaleX(0.9200);">3</div>
<div class="a t" style="left:408.90px;top:165.00px;font-size:9px;line-height:9px;color:#444;font-weight:normal;font-family:'Liberation Sans',sans-serif;transform:scaleX(0.9200);">4</div>
<div class="a t" style="left:446.70px;top:165.00px;font-size:9px;line-height:9px;color:#444;font-weight:normal;font-family:'Liberation Sans',sans-serif;transform:scaleX(0.9200);">5</div>
<div class="a t" style="left:484.50px;top:165.00px;font-size:9px;line-height:9px;color:#444;font-weight:normal;font-family:'Liberation Sans',sans-serif;transform:scaleX(0.9200);">6</div>
<div class="a t" style="left:522.30px;top:165.00px;font-size:9px;line-height:9px;color:#444;font-weight:normal;font-family:'Liberation Sans',sans-serif;transform:scaleX(0.9200);">7</div>
<div class="a t" style="left:560.10px;top:165.00px;font-size:9px;line-height:9px;color:#444;font-weight:normal;font-family:'Liberation Sans',sans-serif;transform:scaleX(0.9200);">8</div>
<div class="a t" style="left:597.90px;top:165.00px;font-size:9px;line-height:9px;color:#444;font-weight:normal;font-family:'Liberation Sans',sans-serif;transform:scaleX(0.9200);">9</div>
<div class="a t" style="left:633.40px;top:165.00px;font-size:9px;line-height:9px;color:#444;font-weight:normal;font-family:'Liberation Sans',sans-serif;transform:scaleX(0.9195);">10</div>
<div class="a t" style="left:671.20px;top:165.00px;font-size:9px;line-height:9px;color:#444;font-weight:normal;font-family:'Liberation Sans',sans-serif;transform:scaleX(0.9853);">11</div>
<div class="a t" style="left:709.00px;top:165.00px;font-size:9px;line-height:9px;color:#444;font-weight:normal;font-family:'Liberation Sans',sans-serif;transform:scaleX(0.9195);">12</div>
<div class="a t" style="left:746.80px;top:165.00px;font-size:9px;line-height:9px;color:#444;font-weight:normal;font-family:'Liberation Sans',sans-serif;transform:scaleX(0.9195);">13</div>
<div class="a t" style="left:784.60px;top:165.00px;font-size:9px;line-height:9px;color:#444;font-weight:normal;font-family:'Liberation Sans',sans-serif;transform:scaleX(0.9195);">14</div>
<div class="a t" style="left:822.40px;top:165.00px;font-size:9px;line-height:9px;color:#444;font-weight:normal;font-family:'Liberation Sans',sans-serif;transform:scaleX(0.9195);">15</div>
<div class="a t" style="left:860.20px;top:165.00px;font-size:9px;line-height:9px;color:#444;font-weight:normal;font-family:'Liberation Sans',sans-serif;transform:scaleX(0.9195);">16</div>
<div class="a t" style="left:935.80px;top:165.00px;font-size:9px;line-height:9px;color:#444;font-weight:normal;font-family:'Liberation Sans',sans-serif;transform:scaleX(0.9195);">18</div>
<svg class="a" style="left:279px;top:159px" width="12" height="24" viewBox="0 0 12 24"><path d="M1.5 1.5H9.5L5.5 9.5Z" fill="#fff" stroke="#7a7a7a"/><path d="M5.5 9.5L1.5 15.5H9.5Z" fill="#fff" stroke="#7a7a7a"/><rect x="1.5" y="16.5" width="8" height="6" fill="#fff" stroke="#7a7a7a"/></svg>
<svg class="a" style="left:898px;top:167px" width="12" height="10" viewBox="0 0 12 10"><path d="M1.5 5L5.5 1L9.5 5V8.5H1.5Z" fill="#fff" stroke="#7a7a7a"/></svg>
<div class="a" style="left:186px;top:182px;width:793px;height:11px;background:#fff;border:1px solid #c6c6c6;border-top:none"></div>
<div class="a" style="left:186px;top:207px;width:793px;height:519px;background:#fff;border:1px solid #c6c6c6;border-bottom:none"></div>
<div class="a t" style="left:262.60px;top:287.00px;font-size:12.7px;line-height:12.7px;color:#000;font-weight:normal;font-family:'Liberation Sans',sans-serif;transform:scaleX(0.9646);">1.</div>
<div class="a t" style="left:290.98px;top:287.00px;font-size:12.7px;line-height:12.7px;color:#000;font-weight:normal;font-family:'Liberation Sans',sans-serif;transform:scaleX(1.0199);">Mission Statement</div>
<svg class="a" style="left:401px;top:295px" width="494" height="2"><defs><pattern id="dp0" x="0.463" y="0" width="3.533" height="2" patternUnits="userSpaceOnUse"><rect width="1" height="2" fill="#000"/></pattern></defs><rect x="0.463" width="492.087" height="2" fill="url(#dp0)"/></svg>
<div class="a t" style="left:897.30px;top:287.00px;font-size:12.7px;line-height:12.7px;color:#000;font-weight:normal;font-family:'Liberation Sans',sans-serif;transform:scaleX(0.8429);">2</div>
<div class="a t" style="left:262.60px;top:312.00px;font-size:12.7px;line-height:12.7px;color:#000;font-weight:normal;font-family:'Liberation Sans',sans-serif;transform:scaleX(0.9704);">2. Executive Summary</div>
<svg class="a" style="left:390px;top:320px" width="505" height="2"><defs><pattern id="dp1" x="0.864" y="0" width="3.533" height="2" patternUnits="userSpaceOnUse"><rect width="1" height="2" fill="#000"/></pattern></defs><rect x="0.864" width="502.686" height="2" fill="url(#dp1)"/></svg>
<div class="a t" style="left:897.30px;top:312.00px;font-size:12.7px;line-height:12.7px;color:#000;font-weight:normal;font-family:'Liberation Sans',sans-serif;transform:scaleX(0.8429);">2</div>
<div class="a t" style="left:276.50px;top:338.00px;font-size:12.7px;line-height:12.7px;color:#000;font-weight:normal;font-family:'Liberation Sans',sans-serif;">2.1 Objectives</div>
<svg class="a" style="left:359px;top:346px" width="536" height="2"><defs><pattern id="dp2" x="0.067" y="0" width="3.533" height="2" patternUnits="userSpaceOnUse"><rect width="1" height="2" fill="#000"/></pattern></defs><rect x="0.067" width="534.483" height="2" fill="url(#dp2)"/></svg>
<div class="a t" style="left:897.30px;top:338.00px;font-size:12.7px;line-height:12.7px;color:#000;font-weight:normal;font-family:'Liberation Sans',sans-serif;transform:scaleX(0.8429);">3</div>
<div class="a t" style="left:276.50px;top:363.00px;font-size:12.7px;line-height:12.7px;color:#000;font-weight:normal;font-family:'Liberation Sans',sans-serif;transform:scaleX(0.9415);">2.2 Keys to Success</div>
<svg class="a" style="left:387px;top:371px" width="508" height="2"><defs><pattern id="dp3" x="0.331" y="0" width="3.533" height="2" patternUnits="userSpaceOnUse"><rect width="1" height="2" fill="#000"/></pattern></defs><rect x="0.331" width="506.219" height="2" fill="url(#dp3)"/></svg>
<div class="a t" style="left:897.30px;top:363.00px;font-size:12.7px;line-height:12.7px;color:#000;font-weight:normal;font-family:'Liberation Sans',sans-serif;transform:scaleX(0.8429);">3</div>
<div class="a t" style="left:262.50px;top:389.00px;font-size:12.7px;line-height:12.7px;color:#000;font-weight:normal;font-family:'Liberation Sans',sans-serif;transform:scaleX(0.9774);">3. Company Summary</div>
<svg class="a" style="left:390px;top:397px" width="505" height="2"><defs><pattern id="dp4" x="0.864" y="0" width="3.533" height="2" patternUnits="userSpaceOnUse"><rect width="1" height="2" fill="#000"/></pattern></defs><rect x="0.864" width="502.686" height="2" fill="url(#dp4)"/></svg>
<div class="a t" style="left:897.30px;top:389.00px;font-size:12.7px;line-height:12.7px;color:#000;font-weight:normal;font-family:'Liberation Sans',sans-serif;transform:scaleX(0.8429);">3</div>
<div class="a t" style="left:276.50px;top:414.00px;font-size:12.7px;line-height:12.7px;color:#000;font-weight:normal;font-family:'Liberation Sans',sans-serif;transform:scaleX(0.9944);">3.1. Company Ownership</div>
<svg class="a" style="left:422px;top:422px" width="473" height="2"><defs><pattern id="dp5" x="0.661" y="0" width="3.533" height="2" patternUnits="userSpaceOnUse"><rect width="1" height="2" fill="#000"/></pattern></defs><rect x="0.661" width="470.889" height="2" fill="url(#dp5)"/></svg>
<div class="a t" style="left:897.30px;top:414.00px;font-size:12.7px;line-height:12.7px;color:#000;font-weight:normal;font-family:'Liberation Sans',sans-serif;transform:scaleX(0.8429);">4</div>
<div class="a t" style="left:276.50px;top:440.00px;font-size:12.7px;line-height:12.7px;color:#000;font-weight:normal;font-family:'Liberation Sans',sans-serif;transform:scaleX(0.9893);">3.2 Start-Up Summary</div>
<svg class="a" style="left:404px;top:448px" width="491" height="2"><defs><pattern id="dp6" x="0.996" y="0" width="3.533" height="2" patternUnits="userSpaceOnUse"><rect width="1" height="2" fill="#000"/></pattern></defs><rect x="0.996" width="488.554" height="2" fill="url(#dp6)"/></svg>
<div class="a t" style="left:897.30px;top:440.00px;font-size:12.7px;line-height:12.7px;color:#000;font-weight:normal;font-family:'Liberation Sans',sans-serif;transform:scaleX(0.8429);">4</div>
<div class="a t" style="left:290.40px;top:465.00px;font-size:12.7px;line-height:12.7px;color:#000;font-weight:normal;font-family:'Liberation Sans',sans-serif;transform:scaleX(0.8823);">START-UP EXPENSE DETAILS:</div>
<svg class="a" style="left:454px;top:473px" width="441" height="2"><defs><pattern id="dp7" x="0.458" y="0" width="3.533" height="2" patternUnits="userSpaceOnUse"><rect width="1" height="2" fill="#000"/></pattern></defs><rect x="0.458" width="439.092" height="2" fill="url(#dp7)"/></svg>
<div class="a t" style="left:897.30px;top:465.00px;font-size:12.7px;line-height:12.7px;color:#000;font-weight:normal;font-family:'Liberation Sans',sans-serif;transform:scaleX(0.8429);">4</div>
<div class="a t" style="left:276.50px;top:490.00px;font-size:12.7px;line-height:12.7px;color:#000;font-weight:normal;font-family:'Liberation Sans',sans-serif;transform:scaleX(0.9888);">3.3 Company Location and Facilities</div>
<svg class="a" style="left:482px;top:498px" width="413" height="2"><defs><pattern id="dp8" x="0.722" y="0" width="3.533" height="2" patternUnits="userSpaceOnUse"><rect width="1" height="2" fill="#000"/></pattern></defs><rect x="0.722" width="410.828" height="2" fill="url(#dp8)"/></svg>
<div class="a t" style="left:897.30px;top:490.00px;font-size:12.7px;line-height:12.7px;color:#000;font-weight:normal;font-family:'Liberation Sans',sans-serif;transform:scaleX(0.8429);">5</div>
<div class="a t" style="left:290.40px;top:516.00px;font-size:12.7px;line-height:12.7px;color:#000;font-weight:normal;font-family:'Liberation Sans',sans-serif;transform:scaleX(0.9715);">3.3.1 Pros:</div>
<svg class="a" style="left:352px;top:524px" width="544" height="2"><defs><pattern id="dp9" x="0.001" y="0" width="3.533" height="2" patternUnits="userSpaceOnUse"><rect width="1" height="2" fill="#000"/></pattern></defs><rect x="0.001" width="541.549" height="2" fill="url(#dp9)"/></svg>
<div class="a t" style="left:897.30px;top:516.00px;font-size:12.7px;line-height:12.7px;color:#000;font-weight:normal;font-family:'Liberation Sans',sans-serif;transform:scaleX(0.8429);">5</div>
<div class="a t" style="left:290.40px;top:541.00px;font-size:12.7px;line-height:12.7px;color:#000;font-weight:normal;font-family:'Liberation Sans',sans-serif;transform:scaleX(0.9509);">3.3.2 Cons:</div>
<svg class="a" style="left:355px;top:549px" width="540" height="2"><defs><pattern id="dp10" x="0.534" y="0" width="3.533" height="2" patternUnits="userSpaceOnUse"><rect width="1" height="2" fill="#000"/></pattern></defs><rect x="0.534" width="538.016" height="2" fill="url(#dp10)"/></svg>
<div class="a t" style="left:897.30px;top:541.00px;font-size:12.7px;line-height:12.7px;color:#000;font-weight:normal;font-family:'Liberation Sans',sans-serif;transform:scaleX(0.8429);">5</div>
<div class="a t" style="left:262.50px;top:567.00px;font-size:12.7px;line-height:12.7px;color:#000;font-weight:normal;font-family:'Liberation Sans',sans-serif;transform:scaleX(0.9838);">4. Products</div>
<svg class="a" style="left:330px;top:575px" width="565" height="2"><defs><pattern id="dp11" x="0.803" y="0" width="3.533" height="2" patternUnits="userSpaceOnUse"><rect width="1" height="2" fill="#000"/></pattern></defs><rect x="0.803" width="562.747" height="2" fill="url(#dp11)"/></svg>
<div class="a t" style="left:897.30px;top:567.00px;font-size:12.7px;line-height:12.7px;color:#000;font-weight:normal;font-family:'Liberation Sans',sans-serif;transform:scaleX(0.8429);">6</div>
<div class="a t" style="left:276.50px;top:592.00px;font-size:12.7px;line-height:12.7px;color:#000;font-weight:normal;font-family:'Liberation Sans',sans-serif;transform:scaleX(1.0061);">4.1 Competitive Comparison</div>
<svg class="a" style="left:440px;top:600px" width="455" height="2"><defs><pattern id="dp12" x="0.326" y="0" width="3.533" height="2" patternUnits="userSpaceOnUse"><rect width="1" height="2" fill="#000"/></pattern></defs><rect x="0.326" width="453.224" height="2" fill="url(#dp12)"/></svg>
<div class="a t" style="left:897.30px;top:592.00px;font-size:12.7px;line-height:12.7px;color:#000;font-weight:normal;font-family:'Liberation Sans',sans-serif;transform:scaleX(0.8429);">6</div>
<div class="a t" style="left:276.50px;top:618.00px;font-size:12.7px;line-height:12.7px;color:#000;font-weight:normal;font-family:'Liberation Sans',sans-serif;transform:scaleX(1.0082);">4.2 Product Description</div>
<svg class="a" style="left:412px;top:626px" width="483" height="2"><defs><pattern id="dp13" x="0.062" y="0" width="3.533" height="2" patternUnits="userSpaceOnUse"><rect width="1" height="2" fill="#000"/></pattern></defs><rect x="0.062" width="481.488" height="2" fill="url(#dp13)"/></svg>
<div class="a t" style="left:897.30px;top:618.00px;font-size:12.7px;line-height:12.7px;color:#000;font-weight:normal;font-family:'Liberation Sans',sans-serif;transform:scaleX(0.8429);">6</div>
<div class="a t" style="left:290.40px;top:643.00px;font-size:12.7px;line-height:12.7px;color:#000;font-weight:normal;font-family:'Liberation Sans',sans-serif;transform:scaleX(0.9893);">4.2.1 Products</div>
<svg class="a" style="left:373px;top:651px" width="522" height="2"><defs><pattern id="dp14" x="0.199" y="0" width="3.533" height="2" patternUnits="userSpaceOnUse"><rect width="1" height="2" fill="#000"/></pattern></defs><rect x="0.199" width="520.351" height="2" fill="url(#dp14)"/></svg>
<div class="a t" style="left:897.30px;top:643.00px;font-size:12.7px;line-height:12.7px;color:#000;font-weight:normal;font-family:'Liberation Sans',sans-serif;transform:scaleX(0.8429);">6</div>
<div class="a t" style="left:276.50px;top:669.00px;font-size:12.7px;line-height:12.7px;color:#000;font-weight:normal;font-family:'Liberation Sans',sans-serif;transform:scaleX(1.0132);">4.3 Fulfillment</div>
<svg class="a" style="left:362px;top:677px" width="533" height="2"><defs><pattern id="dp15" x="0.600" y="0" width="3.533" height="2" patternUnits="userSpaceOnUse"><rect width="1" height="2" fill="#000"/></pattern></defs><rect x="0.600" width="530.950" height="2" fill="url(#dp15)"/></svg>
<div class="a t" style="left:897.30px;top:669.00px;font-size:12.7px;line-height:12.7px;color:#000;font-weight:normal;font-family:'Liberation Sans',sans-serif;transform:scaleX(0.8429);">6</div>
<div class="a t" style="left:276.50px;top:694.00px;font-size:12.7px;line-height:12.7px;color:#000;font-weight:normal;font-family:'Liberation Sans',sans-serif;transform:scaleX(0.9739);">4.4 Future Services</div>
<svg class="a" style="left:387px;top:702px" width="508" height="2"><defs><pattern id="dp16" x="0.331" y="0" width="3.533" height="2" patternUnits="userSpaceOnUse"><rect width="1" height="2" fill="#000"/></pattern></defs><rect x="0.331" width="506.219" height="2" fill="url(#dp16)"/></svg>
<div class="a t" style="left:897.30px;top:694.00px;font-size:12.7px;line-height:12.7px;color:#000;font-weight:normal;font-family:'Liberation Sans',sans-serif;transform:scaleX(0.8429);">6</div>
<div class="a t" style="left:262.50px;top:720.00px;font-size:12.7px;line-height:12.7px;color:#000;font-weight:normal;font-family:'Liberation Sans',sans-serif;transform:scaleX(0.9888);">5. Market Analysis Summary</div>
<svg class="a" style="left:426px;top:728px" width="469" height="2"><defs><pattern id="dp17" x="0.194" y="0" width="3.533" height="2" patternUnits="userSpaceOnUse"><rect width="1" height="2" fill="#000"/></pattern></defs><rect x="0.194" width="467.356" height="2" fill="url(#dp17)"/></svg>
<div class="a t" style="left:897.30px;top:720.00px;font-size:12.7px;line-height:12.7px;color:#000;font-weight:normal;font-family:'Liberation Sans',sans-serif;transform:scaleX(0.8429);">7</div>
<div class="a" style="left:0px;top:726px;width:1158px;height:1px;background:#d5d5d5"></div>
<div class="a" style="left:0px;top:727px;width:1158px;height:18px;background:#f1f1f1"></div>
<div class="a t" style="left:6.50px;top:731.00px;font-size:11px;line-height:11px;color:#333;font-weight:normal;font-family:'Liberation Sans',sans-serif;transform:scaleX(0.9877);">Page 2 of 21</div>
<div class="a t" style="left:88.60px;top:731.00px;font-size:11px;line-height:11px;color:#333;font-weight:normal;font-family:'Liberation Sans',sans-serif;transform:scaleX(1.0023);">5455 words</div>
<svg class="a" style="left:166px;top:730px" width="15" height="13" viewBox="0 0 15 13"><path d="M0.5 1.5C2.5 1.5 5 2 7 3V12.5C5 11.5 2.5 11 0.5 11Z" fill="none" stroke="#777"/><path d="M7 3C8 2 9 1.7 10 1.5M7 12.5C8 11.8 8.5 11.5 9 11.3" fill="none" stroke="#777"/><path d="M9.5 5.5L13.5 10M13.5 5.5L9.5 10" stroke="#555" stroke-width="1.4"/><rect x="9" y="10.5" width="5" height="1" fill="#555"/></svg>
<div class="a t" style="left:198.30px;top:731.00px;font-size:11px;line-height:11px;color:#333;font-weight:normal;font-family:'Liberation Sans',sans-serif;transform:scaleX(1.0292);">English (United States)</div>
<svg class="a" style="left:332px;top:730px" width="15" height="13" viewBox="0 0 15 13"><rect x="2.5" y="4.5" width="11.5" height="8" fill="#fff" stroke="#555"/><circle cx="3.5" cy="3.2" r="3" fill="#555"/><rect x="6" y="1" width="8.5" height="3.5" fill="#555"/><g fill="#555"><rect x="4.5" y="6.5" width="2" height="1.5"/><rect x="7.5" y="6.5" width="2" height="1.5"/><rect x="10.5" y="6.5" width="2" height="1.5"/><rect x="4.5" y="9.5" width="2" height="1.5"/><rect x="7.5" y="9.5" width="2" height="1.5"/><rect x="10.5" y="9.5" width="2" height="1.5"/></g></svg>
<svg class="a" style="left:875px;top:729px" width="14" height="15" viewBox="0 0 14 15"><path d="M0.5 1.5L6.5 0.8V12.5L0.5 13.2Z M13.5 1.5L7.5 0.8V12.5L13.5 13.2Z" fill="#fff" stroke="#6d6d6d"/><g fill="#6d6d6d"><rect x="2" y="3" width="4" height="1"/><rect x="2" y="5" width="4" height="1"/><rect x="2" y="7" width="4" height="1"/><rect x="2" y="9" width="4" height="1"/><rect x="8" y="3" width="4" height="1"/><rect x="8" y="5" width="4" height="1"/><rect x="8" y="7" width="4" height="1"/><rect x="8" y="9" width="4" height="1"/><rect x="6.5" y="12" width="1" height="2.5"/></g></svg>
<div class="a" style="left:901px;top:727px;width:37px;height:18px;background:#c8c8c8"></div>
<svg class="a" style="left:913px;top:730px" width="15" height="13" viewBox="0 0 15 13"><rect x="0.5" y="0.5" width="13" height="12" fill="#f4f4f4" stroke="#6d6d6d"/><g fill="#6d6d6d"><rect x="2" y="2" width="10" height="1"/><rect x="2" y="4" width="10" height="1"/><rect x="2" y="6" width="10" height="1"/><rect x="2" y="8" width="10" height="1"/><rect x="2" y="10" width="10" height="1"/></g></svg>
<svg class="a" style="left:950px;top:730px" width="16" height="14" viewBox="0 0 16 14"><path d="M0.5 0.5H11.5V6M0.5 0.5V11.5H6" fill="none" stroke="#6d6d6d"/><g fill="#6d6d6d"><rect x="2" y="2" width="8" height="1"/><rect x="2" y="4" width="6" height="1"/><rect x="2" y="6" width="5" height="1"/><rect x="2" y="8" width="4" height="1"/></g><circle cx="11" cy="10" r="3.8" fill="#6d6d6d"/><path d="M9 8.2Q10.5 9.5 9.5 11.5M12 7Q11.5 9 13.5 10.5M11 13.5Q11.5 12 12.8 12" fill="none" stroke="#e8e8e8" stroke-width="0.9"/></svg>
<div class="a" style="left:982px;top:736px;width:6px;height:2px;background:#555"></div>
<div class="a" style="left:992px;top:737px;width:100px;height:1px;background:#aaa"></div>
<div class="a" style="left:1040px;top:731px;width:5px;height:11px;background:#707070"></div>
<div class="a" style="left:1095px;top:736px;width:8px;height:2px;background:#555"></div>
<div class="a" style="left:1098px;top:733px;width:2px;height:8px;background:#555"></div>
<div class="a t" style="left:1114.80px;top:731.00px;font-size:11px;line-height:11px;color:#333;font-weight:normal;font-family:'Liberation Sans',sans-serif;transform:scaleX(0.9064);">100%</div>
</body></html>
